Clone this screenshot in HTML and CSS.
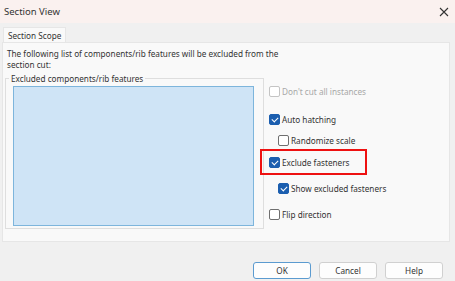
FILE: index.html
```html
<!DOCTYPE html>
<html>
<head>
<meta charset="utf-8">
<link rel="stylesheet" href="styles.css">
</head>
<body>
<div class="win">
  <div class="titlebar">
    <span class="title">Section View</span>
    <svg class="close" width="10" height="10" viewBox="0 0 10 10"><path d="M1 1L9 9M9 1L1 9" stroke="#333" stroke-width="1.1"/></svg>
  </div>
  <div class="tabs"><div class="tab">Section Scope</div></div>
  <div class="panel">
    <p class="desc">The following list of components/rib features will be excluded from the section cut:</p>
    <div class="row">
      <fieldset class="group">
        <legend>Excluded components/rib features</legend>
        <div class="list"></div>
      </fieldset>
      <div class="opts">
        <div class="opt disabled o1"><span class="cb"></span>Don't cut all instances</div>
        <div class="opt o2"><span class="cb on"></span>Auto hatching</div>
        <div class="opt o3 sub"><span class="cb"></span>Randomize scale</div>
        <div class="opt o4"><span class="cb on"></span>Exclude fasteners<span class="hl"></span></div>
        <div class="opt o5 sub"><span class="cb on"></span>Show excluded fasteners</div>
        <div class="opt o6"><span class="cb"></span>Flip direction</div>
      </div>
    </div>
  </div>
  <div class="footer">
    <button class="btn def">OK</button>
    <button class="btn">Cancel</button>
    <button class="btn">Help</button>
  </div>
</div>
</body>
</html>
```

FILE: styles.css
```css
* { box-sizing: border-box; }
html, body { margin: 0; padding: 0; }
body { width: 455px; height: 281px; overflow: hidden; }
.win {
  width: 455px; height: 281px; background: #f0f0f0;
  font-family: "Noto Sans", "Open Sans", sans-serif; font-size: 8.2px; color: #333;
}
.titlebar {
  height: 23px; background: #faf1ef; display: flex; align-items: center;
  justify-content: space-between; padding: 0 6px 0 4px;
}
.title { font-size: 9.5px; color: #333; }
.tabs { height: 42px; display: flex; align-items: flex-end; margin-top: -23px; padding: 27px 0 0 3px; }
.tab {
  height: 15px; line-height: 15px; background: #f9f9f9; padding: 0 4px;
  border: 1px solid #e6e6e6; border-bottom: none; color: #333;
}
.panel {
  margin: 0 5px 0 2px; height: 200px; background: #f9f9f9; border: 1px solid #e6e6e6;
  padding: 0 0 0 2px;
}
.desc { margin: 5px 0 0 2px; line-height: 11px; width: 290px; }
.row { display: flex; margin-top: 4px; }
.group {
  margin: 0; padding: 3px 7px 5px 7px; border: 1px solid #dedede; width: 259px; height: 155px;
  min-width: 0;
}
.group legend { padding: 0 2px; margin-left: -4px; line-height: 9px; }
.list { width: 241px; height: 140px; background: #cfe4f6; border: 1px solid #7db5dc; }
.opts { padding-left: 5px; padding-top: 11px; }
.opt { display: flex; align-items: center; height: 12px; position: relative; white-space: nowrap; }
.opt.sub { padding-left: 9px; }
.o2 { margin-top: 16px; }
.o3 { margin-top: 9px; }
.o4 { margin-top: 10px; }
.o5 { margin-top: 14px; }
.o6 { margin-top: 14px; }
.disabled { color: #a8a8a8; }
.cb {
  width: 11px; height: 11px; border: 1px solid #6f6f6f; border-radius: 2px; background: #fff;
  margin-right: 2px; flex: none; position: relative;
}
.disabled .cb { border-color: #c4c4c4; }
.cb.on { background: #1b5eaf; border-color: #1b5eaf; }
.cb.on::after {
  content: ""; position: absolute; left: 3px; top: 1px; width: 3px; height: 5px;
  border: solid #fff; border-width: 0 1px 1px 0; transform: rotate(45deg);
}
.hl {
  position: absolute; left: -9px; top: -7px; width: 107px; height: 26px;
  border: 2px solid #ee1111;
}
.footer { display: flex; justify-content: flex-end; gap: 8px; padding: 20px 12px 0 0; }
.btn {
  width: 58px; height: 17px; font: inherit; color: #333; background: #fdfdfd;
  border: 1px solid #d0d0d0; border-radius: 3px; padding: 0;
}
.btn.def { border: 1px solid #5b9bd0; }
```
